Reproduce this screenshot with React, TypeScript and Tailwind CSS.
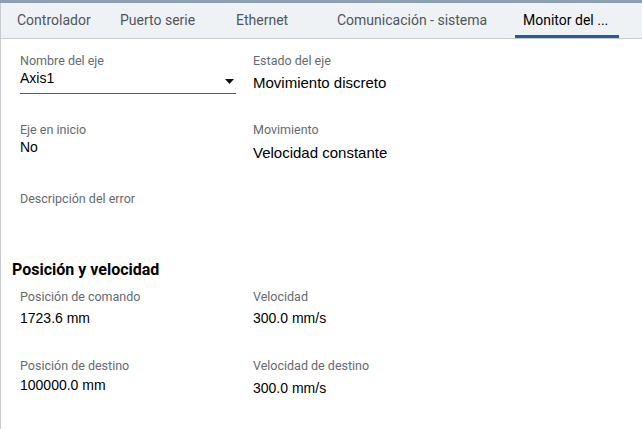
import React from 'react';

const tabs = [
  { name: 'Controlador', w: 'w-[119px]', pl: 'pl-[16px]' },
  { name: 'Puerto serie', w: 'w-[116px]', pl: 'pl-[0px]' },
  { name: 'Ethernet', w: 'w-[101px]', pl: 'pl-[0px]' },
  { name: 'Comunicación - sistema', w: 'w-[178px]', pl: 'pl-[0px]' },
];

function Field({ label, value, valueClass = '' }: { label: string; value?: string; valueClass?: string }) {
  return (
    <div className="flex flex-col">
      <span className="text-[12.5px] leading-[16px] text-[#666b70] font-['Roboto',sans-serif]">{label}</span>
      {value && <span className={`text-black font-['Liberation_Sans',Arial,sans-serif] ${valueClass}`}>{value}</span>}
    </div>
  );
}

export default function App() {
  return (
    <div className="w-[642px] h-[429px] bg-white overflow-hidden font-['Roboto',sans-serif]">
      <div className="h-[3px] bg-[#8c9fb1]" />
      <div className="h-[36px] bg-[#eef2f5] border-b border-[#c5cbd1] border-l border-l-[#c5cbd1] flex items-stretch text-[14px] text-[#50565c]">
        {tabs.map((t) => (
          <div key={t.name} className={`flex items-center ${t.w} ${t.pl} shrink-0`}>
            {t.name}
          </div>
        ))}
        <div className="relative flex items-center w-[104px] pl-[8px] text-black shrink-0">
          Monitor del ...
          <div className="absolute left-0 right-0 bottom-0 h-[3px] bg-[#2a5a96]" />
        </div>
      </div>

      <div className="h-[390px] border-l border-[#c5cbd1] pl-[19px]">
        {/* Row 1 */}
        <div className="grid grid-cols-[216px_1fr] gap-x-[17px] pt-[14px] h-[83px]">
          <div className="flex flex-col">
            <span className="text-[12.5px] leading-[16px] text-[#666b70]">Nombre del eje</span>
            <div className="flex items-start justify-between h-[25px] border-b border-[#5a5f64]">
              <span className="text-[14px] leading-[16px] mt-[1px] text-black font-['Liberation_Sans',Arial,sans-serif]">Axis1</span>
              <svg width="9" height="5" viewBox="0 0 9 5" className="mr-[2px] mt-[10px]">
                <path d="M0 0 H9 L4.5 5 Z" fill="#111" />
              </svg>
            </div>
          </div>
          <Field label="Estado del eje" value="Movimiento discreto" valueClass="text-[15px] leading-[18px] mt-[5px]" />
        </div>

        {/* Row 2 */}
        <div className="grid grid-cols-[216px_1fr] gap-x-[17px] h-[69px]">
          <Field label="Eje en inicio" value="No" valueClass="text-[14px] leading-[18px]" />
          <Field label="Movimiento" value="Velocidad constante" valueClass="text-[15px] leading-[18px] mt-[6px]" />
        </div>

        {/* Row 3 */}
        <div className="h-[69px]">
          <Field label="Descripción del error" />
        </div>

        <h2 className="-ml-[8px] text-[16px] leading-[20px] font-bold text-black h-[29px]">Posición y velocidad</h2>

        {/* Row 4 */}
        <div className="grid grid-cols-[216px_1fr] gap-x-[17px] h-[69px]">
          <Field label="Posición de comando" value="1723.6 mm" valueClass="text-[14px] leading-[16px] mt-[5px]" />
          <Field label="Velocidad" value="300.0 mm/s" valueClass="text-[14px] leading-[16px] mt-[5px]" />
        </div>

        {/* Row 5 */}
        <div className="grid grid-cols-[216px_1fr] gap-x-[17px]">
          <Field label="Posición de destino" value="100000.0 mm" valueClass="text-[14px] leading-[16px] mt-[3px]" />
          <Field label="Velocidad de destino" value="300.0 mm/s" valueClass="text-[14px] leading-[16px] mt-[6px]" />
        </div>
      </div>
    </div>
  );
}
